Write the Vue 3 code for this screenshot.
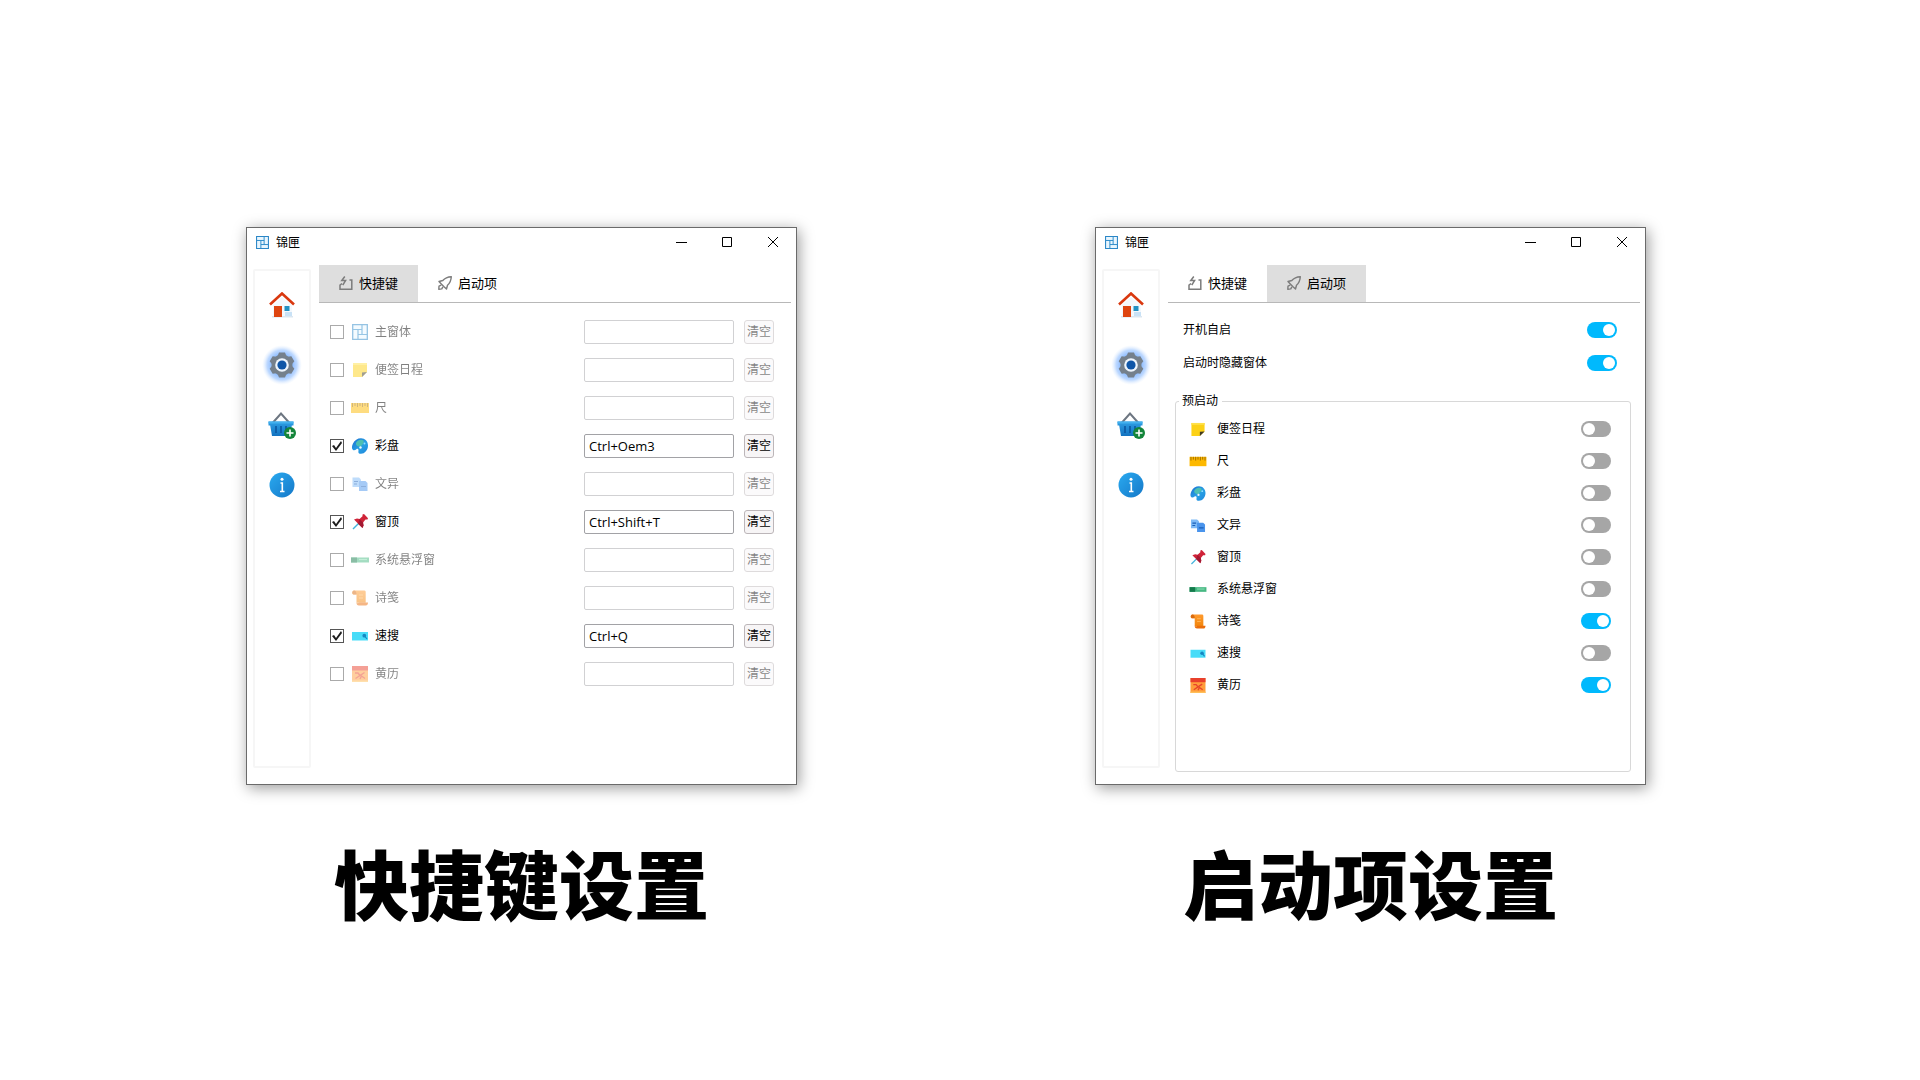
<script setup>
import { reactive } from 'vue'

const navItems = [
  { icon: 'home', label: '主页' },
  { icon: 'gear', label: '设置', active: true },
  { icon: 'basket', label: '组件' },
  { icon: 'info', label: '关于' }
]

const tabs = [
  { id: 'hotkey', icon: 'key', label: '快捷键' },
  { id: 'startup', icon: 'rocket', label: '启动项' }
]

const windows = reactive([
  { tab: 'hotkey', caption: '快捷键设置' },
  { tab: 'startup', caption: '启动项设置' }
])

const hotkeys = reactive([
  { icon: 'main', label: '主窗体', on: false, keys: '' },
  { icon: 'note', label: '便签日程', on: false, keys: '' },
  { icon: 'ruler', label: '尺', on: false, keys: '' },
  { icon: 'palette', label: '彩盘', on: true, keys: 'Ctrl+Oem3' },
  { icon: 'diff', label: '文异', on: false, keys: '' },
  { icon: 'pin', label: '窗顶', on: true, keys: 'Ctrl+Shift+T' },
  { icon: 'float', label: '系统悬浮窗', on: false, keys: '' },
  { icon: 'scroll', label: '诗笺', on: false, keys: '' },
  { icon: 'search', label: '速搜', on: true, keys: 'Ctrl+Q' },
  { icon: 'almanac', label: '黄历', on: false, keys: '' }
])

const general = reactive([
  { label: '开机自启', on: true },
  { label: '启动时隐藏窗体', on: true }
])

const preload = reactive([
  { icon: 'note', label: '便签日程', on: false },
  { icon: 'ruler', label: '尺', on: false },
  { icon: 'palette', label: '彩盘', on: false },
  { icon: 'diff', label: '文异', on: false },
  { icon: 'pin', label: '窗顶', on: false },
  { icon: 'float', label: '系统悬浮窗', on: false },
  { icon: 'scroll', label: '诗笺', on: true },
  { icon: 'search', label: '速搜', on: false },
  { icon: 'almanac', label: '黄历', on: true }
])
</script>

<template>
  <svg class="sprite" aria-hidden="true">
    <defs>
      <linearGradient id="g-info" x1="0" y1="0" x2="1" y2="1">
        <stop offset="0" stop-color="#2aaaf0" /><stop offset="1" stop-color="#1578c8" />
      </linearGradient>
      <linearGradient id="g-basket" x1="0" y1="0" x2="0" y2="1">
        <stop offset="0" stop-color="#2f9fe4" /><stop offset="1" stop-color="#1272c0" />
      </linearGradient>
      <linearGradient id="g-palette" x1="0" y1="0" x2="1" y2="1">
        <stop offset="0" stop-color="#1a6fd0" /><stop offset="0.55" stop-color="#28a0e4" /><stop offset="1" stop-color="#1f86dc" />
      </linearGradient>
      <linearGradient id="g-scroll" x1="0" y1="0" x2="0" y2="1">
        <stop offset="0" stop-color="#ff9a2e" /><stop offset="1" stop-color="#f2860c" />
      </linearGradient>
      <radialGradient id="g-glow">
        <stop offset="0.45" stop-color="#7db2ff" />
        <stop offset="0.75" stop-color="#a8ccff" stop-opacity="0.75" />
        <stop offset="1" stop-color="#dcebff" stop-opacity="0" />
      </radialGradient>
    </defs>
    <symbol id="i-home" viewBox="0 0 26 26">
      <path d="M4 13 13 5l10 8v11H4z" fill="#f4f8fc" />
      <path d="M16 20h7v4h-7z" fill="#c9e2f6" />
      <path d="M3 24h21v1.500H3z" fill="#dbe6f0" />
      <path d="M5 14h8v11H5z" fill="#de4510" />
      <path d="M15.500 14h5v5h-5z" fill="#2191c4" />
      <path d="M1 12.500 13 1.500l12 11" fill="none" stroke="#d9380f" stroke-width="2.600" />
    </symbol>
    <symbol id="i-gear" viewBox="0 0 40 40">
      <circle cx="20" cy="20" r="20" fill="url(#g-glow)" />
      <g fill="#75808c">
        <circle cx="20" cy="20" r="10.500" />
        <path d="M17 7.500h6l2 5H15zM17 32.500h6l2-5H15z" />
        <path d="M17 7.500h6l2 5H15zM17 32.500h6l2-5H15z" transform="rotate(60 20 20)" />
        <path d="M17 7.500h6l2 5H15zM17 32.500h6l2-5H15z" transform="rotate(120 20 20)" />
      </g>
      <circle cx="20" cy="20" r="6.800" fill="#eef5fd" />
      <circle cx="20" cy="20" r="4.600" fill="#0f56a8" />
    </symbol>
    <symbol id="i-basket" viewBox="0 0 28 28">
      <path d="M5 11.500 13 2.500l8 9" fill="none" stroke="#6d7681" stroke-width="2" />
      <path d="M0.500 10.500h25v4h-1.700L22 25H4L2.200 14.500H0.500z" fill="url(#g-basket)" />
      <path d="M0.500 10.500h25v2h-25z" fill="#43b1ef" />
      <path d="M8 15v7M13 15v7M18 15v5" stroke="#0b56a0" stroke-width="1.600" />
      <circle cx="22" cy="22" r="6" fill="#14853a" />
      <path d="M22 18.500v7M18.500 22h7" stroke="#fff" stroke-width="1.600" />
    </symbol>
    <symbol id="i-info" viewBox="0 0 26 26">
      <circle cx="13" cy="13" r="12.500" fill="url(#g-info)" />
      <circle cx="13" cy="7.200" r="1.500" fill="#fff" />
      <path d="M11.500 11H13.300v8M11 19.500h4.500" fill="none" stroke="#fff" stroke-width="1.600" />
    </symbol>
    <symbol id="i-key" viewBox="0 0 14 14">
      <path d="M3 7.500 1 9.200v4h11.800V4H10.500M5.800 0.500 2.800 4.500h3.800L3.800 9.200" fill="none" stroke="#7c7c7c" stroke-width="1.500" />
    </symbol>
    <symbol id="i-rocket" viewBox="0 0 14 14">
      <path d="M13.300 0.700C9.500 0.900 7 2 4.800 4.500L1 5.500l2.300 2.400 3 3L8.500 13l1-3.800C12 7 13.100 4.500 13.300 0.700zM3.200 9.200 1 10.200l-.2 3 3-.3 1-2" fill="none" stroke="#7c7c7c" stroke-width="1.400" stroke-linejoin="round" />
    </symbol>
    <symbol id="i-main" viewBox="0 0 16 16">
      <path d="M0.700 0.700h14.600v14.600H0.700z" fill="#e9f6fe" stroke="#2a86c6" stroke-width="1.300" />
      <path d="M0.700 5.500H10M6 5.500V10M10 0.700V10.500M6 10.500h9.300M6 10v5.300" fill="none" stroke="#2f8ccb" stroke-width="1.200" />
    </symbol>
    <symbol id="i-note" viewBox="0 0 16 16">
      <path d="M1 1h14v9l-5 5H1z" fill="#fcd116" />
      <path d="M10 15v-4.500L15 10z" fill="#3f3a26" />
      <path d="M1 1h14v2H1z" fill="#ffe04a" />
    </symbol>
    <symbol id="i-ruler" viewBox="0 0 20 16">
      <path d="M1 3h18v10H1z" fill="#fdb900" />
      <path d="M2.500 3v4M5 3v3M7.500 3v4M10 3v3M12.500 3v4M15 3v3M17.500 3v4" stroke="#9c6a00" />
    </symbol>
    <symbol id="i-palette" viewBox="0 0 16 16">
      <path d="M9 0.300C13 0.300 16 3.300 16 7.500c0 4.500-3.200 8.300-7 8.300-2 0-3-1-2.600-2.600.5-2-.6-3-2-2-1 .8-2.200 1.600-3.400.8C-.6 10.800-.2 7.800 1 5.500 2.600 2.300 5.500 0.300 9 0.300z" fill="url(#g-palette)" />
      <path d="M4 5C5.500 2 9 1 11.500 2.500c1 2.800-1.500 4-2.500 6C6.500 8.500 3.500 8 4 5z" fill="#4dbfb2" />
      <circle cx="8.500" cy="9.500" r="1.200" fill="#e9f8ff" />
      <circle cx="12.500" cy="5.500" r="1" fill="#8ce0ff" />
    </symbol>
    <symbol id="i-diff" viewBox="0 0 16 16">
      <path d="M0.500 1.500H7L9 3.500V11H0.500z" fill="#7db9f6" />
      <path d="M7 5h6.500L15.500 7v8H7z" fill="#4a94ec" />
      <path d="M2 5.500h4M2 8h3M9 10.500h5" stroke="#1a5fb8" stroke-width="1.200" />
    </symbol>
    <symbol id="i-pin" viewBox="0 0 16 16">
      <path d="M6.500 9.500 1 15" stroke="#43b4dc" stroke-width="1.400" />
      <path d="M2 5.500 5 4.500 7.500 5l3-2.700L10.500 0.500 12 0l4 4.200-.5 1.300h-2L11 8.500l.5 3L10.500 14z" fill="#d02338" />
      <path d="m7.500 5 3.500 3.500.5 3L10.500 14 6 9.700z" fill="#a31932" />
    </symbol>
    <symbol id="i-float" viewBox="0 0 18 16">
      <path d="M0 5.500h18v5H0z" fill="#47b883" />
      <path d="M0 5.500h6v5H0z" fill="#147a4b" />
      <path d="M8 7.500h8" stroke="#86dcb0" stroke-width="1.200" />
    </symbol>
    <symbol id="i-scroll" viewBox="0 0 16 16">
      <path d="M2 0.500h10.500c1 0 1.200.8 1.200 1.800v10.500H4.500V4.500h-3C-.2 4-.2 1 2 0.500z" fill="url(#g-scroll)" />
      <path d="M2 0.500c1.800 0 2.500 2 2.500 4h-3C-.2 4-.2 1 2 0.500z" fill="#d96b10" />
      <path d="M7 12.500h9c0 2-.8 3-2.200 3H7c-1.800 0-2.500-1.200-2.500-3 1 1 2 .8 2.500 0z" fill="#ea6d0a" />
      <path d="M7 5h4M7 8h4" stroke="#ffb455" />
    </symbol>
    <symbol id="i-search" viewBox="0 0 16 16">
      <path d="M0 4h16v8.500H0z" fill="#48dcf8" />
      <circle cx="12.300" cy="7.700" r="1.900" fill="#1787c2" />
      <path d="m13 8.500 2 2.500" stroke="#1787c2" stroke-width="1.200" />
    </symbol>
    <symbol id="i-almanac" viewBox="0 0 16 16">
      <path d="M0 0h16v16H0z" fill="#ff9d3a" />
      <path d="M0 0h16v4.500H0z" fill="#e8402c" />
      <path d="M0 14.500h16V16H0z" fill="#ffc05a" />
      <path d="M3 7h3l2 2.500L12.500 6.500M3.500 12.500l4.500-3M8 13l1.500-3 3.500 2.500" fill="none" stroke="#e8452a" stroke-width="1.400" />
    </symbol>
  </svg>

  <main class="page">
    <figure v-for="(win, w) in windows" :key="w" class="shot">
      <section class="window">
        <header class="titlebar">
          <svg class="app-icon"><use href="#i-main" /></svg>
          <h1 class="title">锦匣</h1>
          <button class="caption-btn" type="button" aria-label="最小化">
            <svg viewBox="0 0 11 11"><path d="M0 5.500h11" /></svg>
          </button>
          <button class="caption-btn" type="button" aria-label="最大化">
            <svg viewBox="0 0 11 11"><path d="M0.500 0.500h9v9h-9z" /></svg>
          </button>
          <button class="caption-btn" type="button" aria-label="关闭">
            <svg viewBox="0 0 11 11"><path d="M0 0l10 10M10 0l-10 10" /></svg>
          </button>
        </header>

        <div class="body">
          <nav class="sidebar">
            <button v-for="item in navItems" :key="item.icon" class="nav-btn" type="button" :aria-label="item.label">
              <svg :class="['nav-icon', item.icon]"><use :href="'#i-' + item.icon" /></svg>
            </button>
          </nav>

          <div class="panel">
            <div class="tabs" role="tablist">
              <button
                v-for="tab in tabs"
                :key="tab.id"
                type="button"
                role="tab"
                :aria-selected="win.tab === tab.id"
                :class="['tab', { active: win.tab === tab.id }]"
                @click="win.tab = tab.id"
              >
                <svg class="tab-icon"><use :href="'#i-' + tab.icon" /></svg>
                {{ tab.label }}
              </button>
            </div>

            <div v-if="win.tab === 'hotkey'" class="hotkeys">
              <div v-for="(row, i) in hotkeys" :key="row.icon" :class="['hotkey', { off: !row.on }]">
                <input :id="`hk-${w}-${i}`" v-model="row.on" class="check" type="checkbox" />
                <label class="name" :for="`hk-${w}-${i}`">
                  <svg class="item-icon"><use :href="'#i-' + row.icon" /></svg>
                  {{ row.label }}
                </label>
                <input v-model="row.keys" class="keys" type="text" :disabled="!row.on" :aria-label="row.label + '快捷键'" />
                <button class="clear" type="button" :disabled="!row.on" @click="row.keys = ''">清空</button>
              </div>
            </div>

            <div v-else class="startup">
              <div class="general">
                <label v-for="row in general" :key="row.label" class="option">
                  {{ row.label }}
                  <input v-model="row.on" class="toggle" type="checkbox" role="switch" />
                </label>
              </div>
              <fieldset class="group">
                <legend>预启动</legend>
                <label v-for="row in preload" :key="row.icon" class="preload">
                  <svg class="item-icon"><use :href="'#i-' + row.icon" /></svg>
                  {{ row.label }}
                  <input v-model="row.on" class="toggle" type="checkbox" role="switch" />
                </label>
              </fieldset>
            </div>
          </div>
        </div>
      </section>
      <figcaption class="caption">{{ win.caption }}</figcaption>
    </figure>
  </main>
</template>

<style>
body {
  margin: 0;
  background: #fff;
}
</style>

<style scoped>
.sprite {
  position: absolute;
  width: 0;
  height: 0;
}

.page {
  display: grid;
  grid-template-columns: 1fr 1fr;
  column-gap: 298px;
  padding: 227px 274px 60px 246px;
  font: 12px/16px "Open Sans", "Noto Sans CJK SC", sans-serif;
  color: #000;
}

.shot {
  margin: 0;
}

.window {
  display: flex;
  flex-direction: column;
  box-sizing: border-box;
  min-height: 558px;
  border: 1px solid #6a6a6a;
  background: #fff;
  box-shadow: 2px 3px 14px rgba(0, 0, 0, 0.4);
}

button,
input {
  font: inherit;
  color: inherit;
  margin: 0;
}

.titlebar {
  display: flex;
  align-items: center;
  height: 29px;
  padding-left: 9px;
}

.app-icon {
  width: 13px;
  height: 13px;
}

.title {
  flex: 1;
  margin: 0 0 0 7px;
  font-size: 12px;
  font-weight: 400;
}

.caption-btn {
  display: flex;
  align-items: center;
  justify-content: center;
  width: 46px;
  height: 29px;
  padding: 0;
  border: 0;
  background: none;
}

.caption-btn svg {
  width: 11px;
  height: 11px;
  fill: none;
  stroke: #000;
}

.body {
  display: flex;
  flex: 1;
  gap: 8px;
  padding: 8px 5px 12px 6px;
}

.sidebar {
  display: flex;
  flex-direction: column;
  box-sizing: border-box;
  width: 58px;
  margin: 4px 0;
  padding-top: 4px;
  border: 2px solid #f6f6f6;
  border-radius: 2px;
}

.nav-btn {
  display: flex;
  align-items: center;
  justify-content: center;
  height: 60px;
  padding: 0;
  border: 0;
  background: none;
}

.nav-icon {
  width: 26px;
  height: 26px;
}

.nav-icon.gear {
  width: 40px;
  height: 40px;
}

.nav-icon.basket {
  width: 28px;
  height: 28px;
}

.panel {
  display: flex;
  flex: 1;
  flex-direction: column;
}

.tabs {
  display: flex;
  border-bottom: 1px solid #b8b8b8;
}

.tab {
  display: flex;
  align-items: center;
  justify-content: center;
  gap: 6px;
  width: 99px;
  height: 37px;
  padding: 0 0 2px;
  border: 0;
  background: none;
  font-size: 13px;
}

.tab.active {
  background: #dedede;
}

.tab-icon {
  width: 14px;
  height: 14px;
}

.hotkeys {
  padding: 10px 17px 0 11px;
}

.hotkey {
  display: flex;
  align-items: center;
  height: 38px;
}

.hotkey.off {
  opacity: 0.5;
}

.check {
  appearance: none;
  box-sizing: border-box;
  width: 14px;
  height: 14px;
  margin-right: 6px;
  border: 1px solid #555;
  background: #fff;
}

.check:checked::before {
  content: "";
  display: block;
  width: 12px;
  height: 12px;
  background: #1c1c1c;
  clip-path: polygon(1px 6px, 3px 5px, 5px 8px, 10px 1px, 11px 3px, 5px 11px);
}

.name {
  display: flex;
  flex: 1;
  align-items: center;
  gap: 5px;
}

.item-icon {
  width: 20px;
  height: 16px;
}

.keys {
  box-sizing: border-box;
  width: 150px;
  height: 24px;
  padding: 0 4px;
  border: 1px solid #a2a2a6;
  border-radius: 2px;
  background: #fff;
  font-size: 13px;
}

.clear {
  width: 30px;
  height: 24px;
  margin-left: 10px;
  padding: 0;
  border: 1px solid #bcb6b9;
  border-radius: 3px;
  background: #f7f5f6;
}

.startup {
  display: flex;
  flex: 1;
  flex-direction: column;
  padding: 10px 9px 0 7px;
}

.general {
  padding: 0 14px 0 8px;
}

.option,
.preload {
  display: flex;
  align-items: center;
}

.option {
  height: 33px;
}

.preload {
  gap: 9px;
  height: 32px;
  padding: 0 16px 0 9px;
}

.preload .item-icon {
  width: 20px;
  height: 15px;
}

.group {
  flex: 1;
  margin: 14px 0 0;
  padding: 4px 3px 0;
  border: 1px solid #d8d8d8;
  border-radius: 3px;
}

.group legend {
  padding: 0 4px 0 3px;
}

.toggle {
  appearance: none;
  box-sizing: border-box;
  width: 30px;
  height: 16px;
  margin-left: auto;
  padding: 2px;
  border-radius: 8px;
  background: #a6a6a6;
}

.toggle::before {
  content: "";
  display: block;
  width: 12px;
  height: 12px;
  border-radius: 6px;
  background: #fff;
}

.toggle:checked {
  background: #00b9fd;
}

.toggle:checked::before {
  margin-left: auto;
}

.caption {
  margin-top: 60px;
  font-size: 75px;
  font-weight: 900;
  line-height: 80px;
  text-align: center;
  white-space: nowrap;
}

@media (max-width: 1500px) {
  .page {
    grid-template-columns: minmax(0, 551px);
    justify-content: center;
    row-gap: 80px;
    padding: 60px 24px;
  }
}
</style>
